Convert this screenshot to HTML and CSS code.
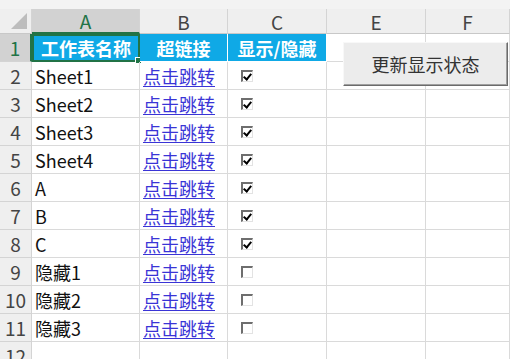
FILE: index.html
```html
<!DOCTYPE html>
<html lang="zh-CN">
<head>
  <meta charset="UTF-8" />
  <title>工作表目录</title>
  <link rel="stylesheet" href="styles.css">
</head>
<body>

  <div class="sheet">
    <div class="topbar"></div>
    <div class="grid">
      <div class="corner"><span class="tri"></span></div>
      <div class="colhead sel">A</div>
      <div class="colhead">B</div>
      <div class="colhead">C</div>
      <div class="colhead">E</div>
      <div class="colhead">F</div>

      <div class="rowhead sel">1</div>
      <div class="cell title active">工作表名称<span class="handle"></span></div>
      <div class="cell title">超链接</div>
      <div class="cell title">显示/隐藏</div>
      <div class="cell"></div>
      <div class="cell"></div>

      <div class="rowhead">2</div>
      <div class="cell">Sheet1</div>
      <div class="cell"><a href="#">点击跳转</a></div>
      <div class="cell"><span class="box on"></span></div>
      <div class="cell"></div>
      <div class="cell"></div>

      <div class="rowhead">3</div>
      <div class="cell">Sheet2</div>
      <div class="cell"><a href="#">点击跳转</a></div>
      <div class="cell"><span class="box on"></span></div>
      <div class="cell"></div>
      <div class="cell"></div>

      <div class="rowhead">4</div>
      <div class="cell">Sheet3</div>
      <div class="cell"><a href="#">点击跳转</a></div>
      <div class="cell"><span class="box on"></span></div>
      <div class="cell"></div>
      <div class="cell"></div>

      <div class="rowhead">5</div>
      <div class="cell">Sheet4</div>
      <div class="cell"><a href="#">点击跳转</a></div>
      <div class="cell"><span class="box on"></span></div>
      <div class="cell"></div>
      <div class="cell"></div>

      <div class="rowhead">6</div>
      <div class="cell">A</div>
      <div class="cell"><a href="#">点击跳转</a></div>
      <div class="cell"><span class="box on"></span></div>
      <div class="cell"></div>
      <div class="cell"></div>

      <div class="rowhead">7</div>
      <div class="cell">B</div>
      <div class="cell"><a href="#">点击跳转</a></div>
      <div class="cell"><span class="box on"></span></div>
      <div class="cell"></div>
      <div class="cell"></div>

      <div class="rowhead">8</div>
      <div class="cell">C</div>
      <div class="cell"><a href="#">点击跳转</a></div>
      <div class="cell"><span class="box on"></span></div>
      <div class="cell"></div>
      <div class="cell"></div>

      <div class="rowhead">9</div>
      <div class="cell">隐藏1</div>
      <div class="cell"><a href="#">点击跳转</a></div>
      <div class="cell"><span class="box"></span></div>
      <div class="cell"></div>
      <div class="cell"></div>

      <div class="rowhead">10</div>
      <div class="cell">隐藏2</div>
      <div class="cell"><a href="#">点击跳转</a></div>
      <div class="cell"><span class="box"></span></div>
      <div class="cell"></div>
      <div class="cell"></div>

      <div class="rowhead">11</div>
      <div class="cell">隐藏3</div>
      <div class="cell"><a href="#">点击跳转</a></div>
      <div class="cell"><span class="box"></span></div>
      <div class="cell"></div>
      <div class="cell"></div>

      <div class="rowhead">12</div>
      <div class="cell"></div>
      <div class="cell"></div>
      <div class="cell"></div>
      <div class="cell"></div>
      <div class="cell"></div>
    </div>

    <button class="update">更新显示状态</button>
  </div>

</body>
</html>
```

FILE: styles.css
```css
body {
  margin: 0;
  background: #fff;
  font-family: "Noto Sans CJK SC", "Noto Sans", sans-serif;
  overflow: hidden;
}

.sheet {
  position: relative;
  width: 510px;
  height: 359px;
}

.topbar {
  height: 9px;
  background: #f3f3f3;
}

.grid {
  display: grid;
  grid-template-columns: 32px 108px 88px 99px 99px 84px;
  grid-template-rows: 25px repeat(12, 28px);
}

.corner,
.colhead,
.rowhead {
  background: #efefef;
  color: #444;
  border-right: 1px solid #d4d4d4;
  border-bottom: 1px solid #c8c8c8;
  box-sizing: border-box;
}

.corner {
  position: relative;
}

.corner .tri {
  position: absolute;
  right: 4px;
  bottom: 4px;
  width: 0;
  height: 0;
  border-left: 16px solid transparent;
  border-bottom: 16px solid #bdbdbd;
}

.colhead {
  display: flex;
  align-items: center;
  justify-content: center;
  font-size: 19px;
  line-height: 1;
}

.rowhead {
  display: flex;
  align-items: center;
  justify-content: center;
  font-size: 19px;
  border-bottom-color: #d4d4d4;
}

.colhead.sel,
.rowhead.sel {
  background: #d2d2d2;
  color: #217346;
}

.colhead.sel {
  border-bottom: 2px solid #217346;
}

.rowhead.sel {
  border-right: 2px solid #217346;
}

.cell {
  position: relative;
  display: flex;
  align-items: center;
  padding-left: 3px;
  font-size: 18px;
  color: #111;
  white-space: nowrap;
  border-right: 1px solid #dadada;
  border-bottom: 1px solid #dadada;
  box-sizing: border-box;
}

.cell.title {
  justify-content: center;
  padding-left: 0;
  background: #0fa9e6;
  color: #fff;
  font-weight: 700;
  border-color: #fff;
}

.cell.active {
  border: 2px solid #217346;
}

.handle {
  position: absolute;
  right: -4px;
  bottom: -4px;
  width: 5px;
  height: 5px;
  background: #217346;
  border: 1px solid #fff;
}

.cell a {
  color: #3a34d6;
  text-decoration: underline;
  text-underline-offset: 2px;
}

.box {
  width: 12px;
  height: 12px;
  margin-left: 10px;
  box-sizing: border-box;
  background: #fff;
  border-top: 2px solid #6e6e6e;
  border-left: 2px solid #6e6e6e;
  border-right: 1px solid #e3e3e3;
  border-bottom: 1px solid #e3e3e3;
  position: relative;
}

.box.on::after {
  content: "";
  position: absolute;
  left: 2px;
  top: 0;
  width: 3px;
  height: 6px;
  border-right: 2px solid #000;
  border-bottom: 2px solid #000;
  transform: rotate(40deg);
}

.update {
  position: absolute;
  left: 343px;
  top: 42px;
  width: 165px;
  height: 44px;
  background: #ececec;
  border: 1px solid #f8f8f8;
  border-right-color: #6b6b6b;
  border-bottom-color: #6b6b6b;
  box-shadow: inset -1px -1px 0 #a0a0a0;
  font-family: "Noto Sans CJK SC", sans-serif;
  font-size: 18px;
  color: #333;
  padding: 0;
  cursor: pointer;
}
```
